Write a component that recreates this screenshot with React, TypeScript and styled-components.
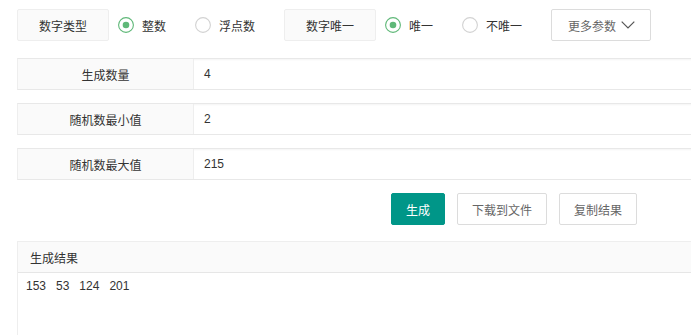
import React from "react";
import styled, { createGlobalStyle } from "styled-components";

const Global = createGlobalStyle`
  html, body { margin: 0; padding: 0; background: #fff; overflow: hidden; }
  body { font-family: "Liberation Sans", "Noto Sans CJK SC", sans-serif; font-size: 12px; color: #333; }
`;

const Page = styled.div`
  padding: 9px 0 0 17px;
  width: 760px;
  height: 335px;
  box-sizing: border-box;
  overflow: hidden;
`;

const OptionBar = styled.div`
  display: flex;
  align-items: center;
  gap: 9px;
  height: 32px;
`;

const TagLabel = styled.div`
  width: 92px;
  height: 32px;
  box-sizing: border-box;
  background: #fafafa;
  border: 1px solid #eeeeee;
  border-radius: 2px;
  display: flex;
  align-items: center;
  justify-content: center;
  color: #333;
`;

const RadioOption = styled.label<{ $checked?: boolean }>`
  display: flex;
  align-items: center;
  gap: 8px;
  margin-right: 20px;
  color: #333;
  cursor: pointer;
`;

const MoreButton = styled.button`
  width: 100px;
  height: 32px;
  box-sizing: border-box;
  background: #fff;
  border: 1px solid #dcdcdc;
  border-radius: 2px;
  display: flex;
  align-items: center;
  padding: 0 0 0 16px;
  gap: 5px;
  font: inherit;
  color: #666;
`;

const FieldList = styled.div`
  display: flex;
  flex-direction: column;
  gap: 13px;
  margin-top: 17px;
`;

const FieldRow = styled.div`
  display: flex;
  height: 32px;
  box-sizing: border-box;
  border-top: 1px solid #e8e8e8;
  border-bottom: 1px solid #e8e8e8;
  border-left: 1px solid #eeeeee;
`;

const FieldLabel = styled.div`
  width: 175px;
  background: #fafafa;
  border-right: 1px solid #eeeeee;
  display: flex;
  align-items: center;
  justify-content: center;
  color: #333;
`;

const FieldValue = styled.div`
  flex: 1;
  display: flex;
  align-items: center;
  padding-left: 10px;
  color: #333;
  box-shadow: inset 0 3px 2px -2px #f4f4f4;
`;

const ButtonBar = styled.div`
  display: flex;
  gap: 12px;
  margin-top: 13px;
  padding-left: 374px;
`;

const ActionButton = styled.button<{ $primary?: boolean }>`
  height: 32px;
  box-sizing: border-box;
  padding: 0 14px;
  border-radius: 2px;
  font: inherit;
  border: 1px solid ${(p) => (p.$primary ? "#009688" : "#dcdcdc")};
  background: ${(p) => (p.$primary ? "#009688" : "#fff")};
  color: ${(p) => (p.$primary ? "#fff" : "#666")};
`;

const ResultPanel = styled.div`
  margin-top: 16px;
  border-left: 1px solid #eeeeee;
  border-top: 1px solid #eeeeee;
  height: 120px;
`;

const ResultHeader = styled.div`
  height: 30px;
  background: #fafafa;
  border-bottom: 1px solid #e6e6e6;
  display: flex;
  align-items: center;
  padding-left: 12px;
  color: #333;
`;

const ResultBody = styled.div`
  padding: 4px 8px;
  line-height: 18px;
  white-space: pre;
  color: #333;
`;

const RadioIcon = ({ checked }: { checked?: boolean }) => (
  <svg width="16" height="16" viewBox="0 0 16 16">
    <circle cx="8" cy="8" r="7.4" fill="#fff" stroke={checked ? "#5FB878" : "#d2d2d2"} strokeWidth="1.1" />
    {checked && <circle cx="8" cy="8" r="3.3" fill="#5FB878" />}
  </svg>
);

const Chevron = () => (
  <svg width="14" height="8" viewBox="0 0 14 8">
    <polyline points="0.7,0.7 7,7 13.3,0.7" fill="none" stroke="#555" strokeWidth="1.2" />
  </svg>
);

const Radio = ({ label, checked }: { label: string; checked?: boolean }) => (
  <RadioOption $checked={checked}>
    <RadioIcon checked={checked} />
    <span>{label}</span>
  </RadioOption>
);

const fields = [
  { label: "生成数量", value: "4" },
  { label: "随机数最小值", value: "2" },
  { label: "随机数最大值", value: "215" },
];

export default function App() {
  return (
    <Page>
      <Global />
      <OptionBar>
        <TagLabel>数字类型</TagLabel>
        <Radio label="整数" checked />
        <Radio label="浮点数" />
        <TagLabel>数字唯一</TagLabel>
        <Radio label="唯一" checked />
        <Radio label="不唯一" />
        <MoreButton>
          <span>更多参数</span>
          <Chevron />
        </MoreButton>
      </OptionBar>
      <FieldList>
        {fields.map((f) => (
          <FieldRow key={f.label}>
            <FieldLabel>{f.label}</FieldLabel>
            <FieldValue>{f.value}</FieldValue>
          </FieldRow>
        ))}
      </FieldList>
      <ButtonBar>
        <ActionButton $primary>生成</ActionButton>
        <ActionButton>下载到文件</ActionButton>
        <ActionButton>复制结果</ActionButton>
      </ButtonBar>
      <ResultPanel>
        <ResultHeader>生成结果</ResultHeader>
        <ResultBody>{"153   53   124   201"}</ResultBody>
      </ResultPanel>
    </Page>
  );
}
